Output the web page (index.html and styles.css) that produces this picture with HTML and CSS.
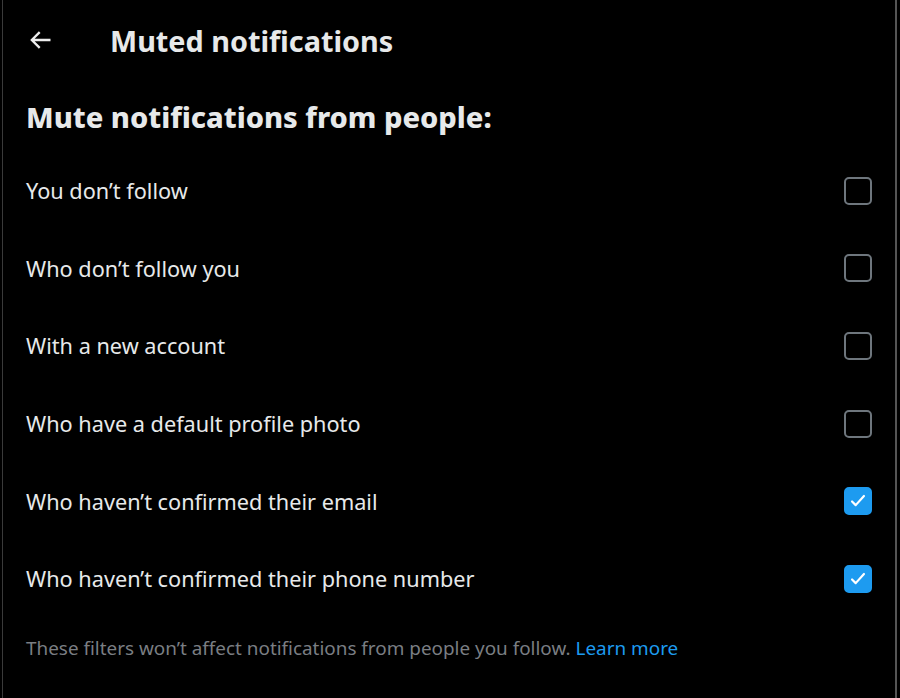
FILE: index.html
```html
<!DOCTYPE html>
<html lang="en">
<head>
<meta charset="utf-8">
<title>Muted notifications</title>
<link rel="stylesheet" href="styles.css">
</head>
<body>
<div class="page">
  <header class="header">
    <button class="back" aria-label="Back">
      <svg viewBox="0 0 24 24" width="24" height="24"><path fill="currentColor" d="M7.414 13l5.043 5.04-1.414 1.42L3.586 12l7.457-7.46 1.414 1.42L7.414 11H21v2H7.414z"/></svg>
    </button>
    <h1 class="title">Muted notifications</h1>
  </header>
  <h2 class="section-title">Mute notifications from people:</h2>
  <ul class="options">
    <li class="option"><span>You don’t follow</span><span class="box"></span></li>
    <li class="option"><span>Who don’t follow you</span><span class="box"></span></li>
    <li class="option"><span>With a new account</span><span class="box"></span></li>
    <li class="option"><span>Who have a default profile photo</span><span class="box"></span></li>
    <li class="option"><span>Who haven’t confirmed their email</span><span class="box checked"><svg viewBox="0 0 24 24" width="22" height="22"><path fill="none" stroke="#fff" stroke-width="2.4" stroke-linecap="round" stroke-linejoin="round" d="M5.5 12.5l4 4 9-10"/></svg></span></li>
    <li class="option"><span>Who haven’t confirmed their phone number</span><span class="box checked"><svg viewBox="0 0 24 24" width="22" height="22"><path fill="none" stroke="#fff" stroke-width="2.4" stroke-linecap="round" stroke-linejoin="round" d="M5.5 12.5l4 4 9-10"/></svg></span></li>
  </ul>
  <p class="note">These filters won’t affect notifications from people you follow. <a href="#">Learn more</a></p>
</div>
</body>
</html>
```
FILE: styles.css
```css
html, body {
  margin: 0;
  padding: 0;
  background: #000;
}
body {
  font-family: "Noto Sans", "Open Sans", sans-serif;
  color: #e7e9ea;
}
.page {
  margin: 0 3px 0 2px;
  min-height: 698px;
  border-left: 1px solid #3a3a3a;
  border-right: 2px solid #555;
  box-sizing: border-box;
  padding: 0 23px 0 23px;
}
.header {
  height: 80px;
  display: flex;
  align-items: center;
}
.back {
  background: none;
  border: 0;
  color: #eee;
  padding: 0;
  width: 84px;
  display: flex;
  align-items: center;
  justify-content: flex-start;
  margin: 0;
}
.back svg {
  width: 28px;
  height: 28px;
}
.title {
  margin: 0;
  font-size: 28.8px;
  font-weight: 700;
  color: #e7e9ea;
}
.section-title {
  margin: 0;
  height: 72px;
  display: flex;
  align-items: center;
  font-size: 29px;
  font-weight: 800;
  color: #e7e9ea;
}
.options {
  list-style: none;
  margin: 0;
  padding: 0;
}
.option {
  height: 77.6px;
  display: flex;
  align-items: center;
  justify-content: space-between;
  font-size: 21.7px;
}
.box {
  width: 28px;
  height: 28px;
  box-sizing: border-box;
  border: 2px solid #6e767d;
  border-radius: 5px;
  display: flex;
  align-items: center;
  justify-content: center;
}
.box.checked {
  background: #1d9bf0;
  border-color: #1d9bf0;
}
.note {
  margin: 17px 0 0;
  font-size: 18.9px;
  color: #7a7e83;
}
.note a {
  color: #1d9bf0;
  text-decoration: none;
}
```
